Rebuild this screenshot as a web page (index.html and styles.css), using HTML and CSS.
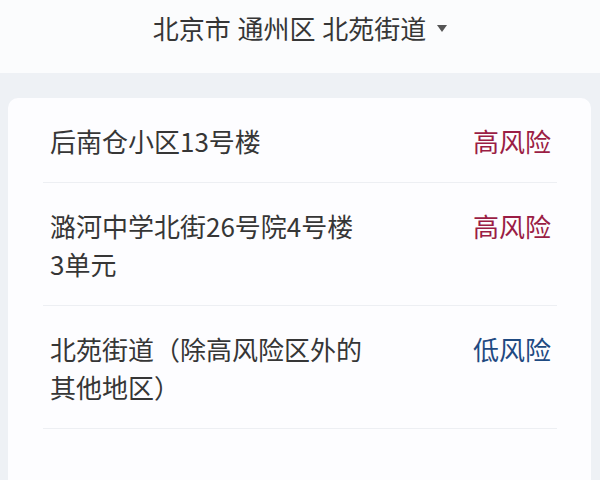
FILE: index.html
```html
<!DOCTYPE html>
<html lang="zh-CN">
<head>
<meta charset="UTF-8" />
<meta name="viewport" content="width=device-width, initial-scale=1" />
<title>风险地区查询</title>
<link rel="stylesheet" href="styles.css">
</head>
<body>
  <header class="area-bar">
    <button class="area-picker" type="button">
      <span>北京市 通州区 北苑街道</span>
      <span class="caret"></span>
    </button>
  </header>

  <main class="page">
    <section class="card" aria-label="风险地区列表">
      <div class="row">
        <div class="place">后南仓小区13号楼</div>
        <div class="level high">高风险</div>
      </div>
      <div class="row">
        <div class="place">潞河中学北街26号院4号楼3单元</div>
        <div class="level high">高风险</div>
      </div>
      <div class="row">
        <div class="place">北苑街道（除高风险区外的其他地区）</div>
        <div class="level low">低风险</div>
      </div>
    </section>
  </main>
</body>
</html>
```

FILE: styles.css
```css
* {
  box-sizing: border-box;
}
html, body {
  margin: 0;
  padding: 0;
  height: 100%;
  background-color: #eef1f5;
  font-family: "Noto Sans CJK SC", "Noto Sans", sans-serif;
  color: #363636;
}

.area-bar {
  background-color: #fbfcfd;
  height: 73px;
  padding-top: 9px;
  display: flex;
  justify-content: center;
}

.area-picker {
  display: flex;
  align-items: center;
  gap: 11px;
  height: 38px;
  padding: 0;
  border: none;
  background: none;
  font: inherit;
  font-size: 26px;
  line-height: 38px;
  word-spacing: 1px;
  color: #363636;
  cursor: pointer;
}

.caret {
  width: 0;
  height: 0;
  margin-top: 1px;
  border-left: 5px solid transparent;
  border-right: 5px solid transparent;
  border-top: 7px solid #555;
}

.page {
  padding: 25px 9px 0 8px;
}

.card {
  background-color: #fdfdff;
  border-radius: 10px;
  padding: 1px 34px 60px 35px;
}

.row {
  display: flex;
  justify-content: space-between;
  align-items: flex-start;
  padding: 23px 6px 22px 7px;
  border-bottom: 1px solid #edeff3;
  font-size: 26px;
  line-height: 38px;
}

.row + .row {
  padding-top: 24px;
}

.place {
  width: 316px;
}

.level {
  white-space: nowrap;
}

.level.high {
  color: #9b1d45;
}

.level.low {
  color: #1f4a82;
}
```
